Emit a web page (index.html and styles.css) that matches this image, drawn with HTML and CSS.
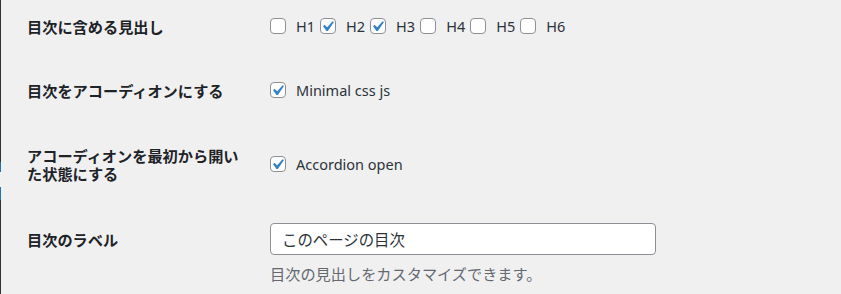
FILE: index.html
```html
<!DOCTYPE html>
<html lang="ja">
<head>
<meta charset="utf-8">
<title>目次設定</title>
<link rel="stylesheet" href="styles.css">
</head>
<body>
<div class="page">
  <div class="edge">
    <div class="edge-dark e1"></div>
    <div class="edge-blue e2"></div>
    <div class="edge-gap e3"></div>
    <div class="edge-blue e4"></div>
    <div class="edge-dark e5"></div>
  </div>
  <main class="form">
    <div class="row row-1">
      <div class="th">目次に含める見出し</div>
      <div class="td checks">
        <label class="opt"><span class="cb"><svg viewBox="0 0 16 16" width="16" height="16"><rect x="0.5" y="0.5" width="15" height="15" rx="3.5" class="box"/></svg></span><span class="opt-text">H1</span></label>
        <label class="opt"><span class="cb"><svg viewBox="0 0 16 16" width="16" height="16"><rect x="0.5" y="0.5" width="15" height="15" rx="3.5" class="box"/><path class="tick" transform="translate(-3 -2) scale(1.05)" d="M14.83 4.89l1.34.94-5.81 8.38H9.02L5.78 9.67l1.34-1.250 2.57 2.4z"/></svg></span><span class="opt-text">H2</span></label>
        <label class="opt"><span class="cb"><svg viewBox="0 0 16 16" width="16" height="16"><rect x="0.5" y="0.5" width="15" height="15" rx="3.5" class="box"/><path class="tick" transform="translate(-3 -2) scale(1.05)" d="M14.83 4.89l1.34.94-5.81 8.38H9.02L5.78 9.67l1.34-1.250 2.57 2.4z"/></svg></span><span class="opt-text">H3</span></label>
        <label class="opt"><span class="cb"><svg viewBox="0 0 16 16" width="16" height="16"><rect x="0.5" y="0.5" width="15" height="15" rx="3.5" class="box"/></svg></span><span class="opt-text">H4</span></label>
        <label class="opt"><span class="cb"><svg viewBox="0 0 16 16" width="16" height="16"><rect x="0.5" y="0.5" width="15" height="15" rx="3.5" class="box"/></svg></span><span class="opt-text">H5</span></label>
        <label class="opt"><span class="cb"><svg viewBox="0 0 16 16" width="16" height="16"><rect x="0.5" y="0.5" width="15" height="15" rx="3.5" class="box"/></svg></span><span class="opt-text">H6</span></label>
      </div>
    </div>
    <div class="row row-2">
      <div class="th">目次をアコーディオンにする</div>
      <div class="td checks">
        <label class="opt"><span class="cb"><svg viewBox="0 0 16 16" width="16" height="16"><rect x="0.5" y="0.5" width="15" height="15" rx="3.5" class="box"/><path class="tick" transform="translate(-3 -2) scale(1.05)" d="M14.83 4.89l1.34.94-5.81 8.38H9.02L5.78 9.67l1.34-1.250 2.57 2.4z"/></svg></span><span class="opt-text">Minimal css js</span></label>
      </div>
    </div>
    <div class="row row-3">
      <div class="th th-2line">アコーディオンを最初から開い<br>た状態にする</div>
      <div class="td checks">
        <label class="opt"><span class="cb"><svg viewBox="0 0 16 16" width="16" height="16"><rect x="0.5" y="0.5" width="15" height="15" rx="3.5" class="box"/><path class="tick" transform="translate(-3 -2) scale(1.05)" d="M14.83 4.89l1.34.94-5.81 8.38H9.02L5.78 9.67l1.34-1.250 2.57 2.4z"/></svg></span><span class="opt-text">Accordion open</span></label>
      </div>
    </div>
    <div class="row row-4">
      <div class="th th-input">目次のラベル</div>
      <div class="td">
        <div class="input">このページの目次</div>
        <p class="desc">目次の見出しをカスタマイズできます。</p>
      </div>
    </div>
  </main>
</div>
</body>
</html>
```

FILE: styles.css
```css
* { box-sizing: border-box; }
html, body { margin: 0; padding: 0; }
body {
  background: #f0f0f1;
  color: #1d2327;
  font-family: "Noto Sans", "Noto Sans CJK JP", sans-serif;
  width: 841px;
  height: 294px;
  overflow: hidden;
}
.page {
  display: flex;
  height: 294px;
}
.edge {
  width: 1px;
  display: flex;
  flex-direction: column;
  flex: none;
}
.edge-dark { background: #2c3338; }
.edge-blue { background: #2271b1; }
.edge-gap { background: #f0f0f1; }
.e1 { height: 162px; }
.e2 { height: 10px; }
.e3 { height: 15px; }
.e4 { height: 13px; }
.e5 { flex: 1; }

.form {
  padding-left: 26px;
  flex: 1;
}
.row {
  display: grid;
  grid-template-columns: 243px 1fr;
  align-items: center;
}
.row-1 { margin-top: 16px; height: 20px; }
.row-2 { margin-top: 44px; height: 20px; }
.row-3 { margin-top: 46px; height: 36px; }
.row-4 { margin-top: 41px; align-items: start; }

.th {
  font-family: "Noto Sans CJK JP", sans-serif;
  font-weight: 700;
  font-size: 15.2px;
  line-height: 20px;
  color: #1d2327;
}
.th-2line { line-height: 18px; }
.th-input { padding-top: 6px; }

.checks {
  display: flex;
  align-items: center;
  gap: 5px;
}
.opt {
  display: flex;
  align-items: center;
  font-size: 14.5px;
  line-height: 20px;
  color: #2c3338;
}
.cb {
  width: 16px;
  height: 16px;
  display: block;
  margin-right: 10px;
  flex: none;
}
.cb svg { display: block; overflow: visible; }
.box { fill: #fff; stroke: #8c8f94; stroke-width: 1; }
.tick { fill: #3582c4; }

.input {
  width: 386px;
  height: 32px;
  background: #fff;
  border: 1px solid #8c8f94;
  border-radius: 4px;
  padding: 0 11px;
  font-family: "Noto Sans CJK JP", sans-serif;
  font-size: 15.4px;
  line-height: 30px;
  color: #2c3338;
}
.desc {
  margin: 8px 0 0;
  font-family: "Noto Sans CJK JP", sans-serif;
  font-size: 15.2px;
  line-height: 20px;
  color: #646970;
}
```
